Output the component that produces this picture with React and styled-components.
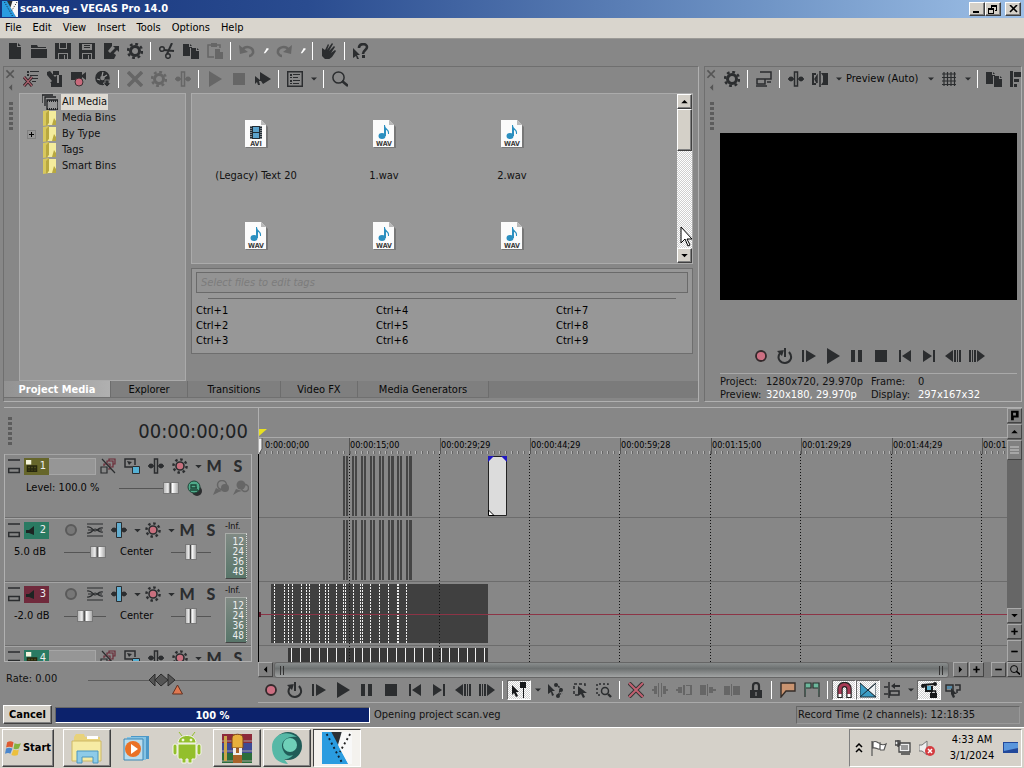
import React from 'react'
import styled, { createGlobalStyle, css } from 'styled-components'

const GlobalStyle = createGlobalStyle`
  * {
    box-sizing: border-box;
  }

  body {
    margin: 0;
    background: #878787;
    color: #111;
    font-family: 'DejaVu Sans Condensed', 'DejaVu Sans', sans-serif;
    font-size: 11px;
    line-height: 16px;
  }

  button, input, select {
    font: inherit;
    color: inherit;
    margin: 0;
  }

  button {
    background: none;
    border: none;
    padding: 0;
  }

  svg {
    display: block;
    flex: none;
  }
`

const raised = css`
  background: #d4d0c8;
  border: 1px solid;
  border-color: #fff #404040 #404040 #fff;
  box-shadow: inset -1px -1px 0 #808080;
`

const dither = css`
  background: repeating-conic-gradient(#fff 0 25%, #cfcfcf 0 50%) 0 0 / 2px 2px;
`

const Page = styled.div`
  min-height: 100vh;
  display: flex;
  flex-direction: column;
  overflow: hidden;
`

/* ---------- title and menu ---------- */

const TitleBar = styled.header`
  height: 18px;
  display: flex;
  align-items: center;
  gap: 2px;
  padding: 0 3px 0 2px;
  background: linear-gradient(90deg, #16347c, #2a4c90 30%, #7095c6 75%, #9dbfe6);
  color: #fff;
`

const Title = styled.h1`
  flex: 1;
  margin: 0;
  font-size: 11px;
  font-weight: 700;
`

const WindowButton = styled.button`
  ${raised}
  width: 16px;
  height: 14px;
  display: grid;
  place-items: center;
  margin-left: ${p => (p.$apart ? '2px' : '-2px')};
  color: #000;
`

const MenuBar = styled.nav`
  height: 21px;
  display: flex;
  gap: 11px;
  padding: 2px 5px;
  background: #d9d5cd;
  border-bottom: 1px solid #9c9a96;
`

const MenuItem = styled.button`
  color: #000;
`

/* ---------- toolbars ---------- */

const Toolbar = styled.div`
  height: ${p => p.$height || 26}px;
  min-width: 0;
  display: flex;
  align-items: center;
  padding-left: ${p => p.$indent || 0}px;
  padding-bottom: 3px;
  overflow: hidden;
`

const ToolButton = styled.button`
  width: ${p => p.$width || 24}px;
  height: 20px;
  flex: none;
  display: grid;
  place-items: center;
  color: ${p => (p.$off ? '#666' : '#2b2d2f')};
  ${p =>
    p.$pressed &&
    css`
      ${dither}
      border: 1px solid;
      border-color: #666 #fff #fff #666;
      color: #16181a;
    `}
`

const Separator = styled.i`
  width: 1px;
  height: 18px;
  flex: none;
  margin: 0 4px 0 3px;
  background: #fff;
`

/* ---------- docks ---------- */

const DockRow = styled.div`
  display: flex;
  gap: 5px;
  padding: 0 2px 5px 3px;
`

const Dock = styled.section`
  flex: ${p => (p.$width ? `0 0 ${p.$width}px` : '1 1 0')};
  min-width: 0;
  display: grid;
  grid-template-columns: 15px minmax(0, 1fr);
  grid-template-rows: auto 1fr auto;
  border: 1px solid;
  border-color: #6f6f6f #b0b0b0 #b0b0b0 #6f6f6f;
`

const GripColumn = styled.div`
  grid-row: 1 / 3;
  display: flex;
  flex-direction: column;
  align-items: center;
  padding: 1px 2px 0 0;
  color: #555;
`

const GripDots = styled.div`
  width: 4px;
  height: 30px;
  margin-top: ${p => p.$top || 0}px;
  background: radial-gradient(circle, #5c5c5c 2px, transparent 2px) 0 0 / 4px 5px;
`

const DockBody = styled.div`
  display: flex;
  gap: 5px;
  padding-right: 5px;
`

const Tree = styled.ul`
  width: 167px;
  min-height: 288px;
  margin: 0;
  padding: 0;
  list-style: none;
  background: #979797;
  border: 1px solid #aaa;
`

const TreeRow = styled.li`
  height: 16px;
  display: grid;
  grid-template-columns: 22px 19px auto;
  justify-content: start;
  align-items: center;
`

const TreeLabel = styled.span`
  padding: 0 1px;
  background: ${p => (p.$selected ? '#dedad2' : 'none')};
`

const Expander = styled.button`
  width: 9px;
  height: 9px;
  margin-left: 7px;
  border: 1px solid #808080;
`

const MediaColumn = styled.div`
  flex: 1;
  min-width: 0;
  display: flex;
  flex-direction: column;
  gap: 4px;
`

const MediaList = styled.div`
  height: 171px;
  display: flex;
  background: #979797;
  border: 1px solid #ababab;
`

const MediaGrid = styled.div`
  flex: 1;
  min-width: 0;
  display: grid;
  grid-template-columns: repeat(auto-fill, 128px);
  grid-auto-rows: 102px;
  overflow: hidden;
`

const MediaItem = styled.figure`
  margin: 0;
  padding-top: 26px;
  display: flex;
  flex-direction: column;
  align-items: center;
  gap: 20px;
`

const ScrollTrack = styled.div`
  ${dither}
  position: relative;
  width: 15px;
  display: flex;
  flex-direction: column;
`

const ScrollButton = styled.button`
  ${raised}
  height: 15px;
  display: grid;
  place-items: center;
  color: #000;
`

const ScrollThumb = styled.div`
  ${raised}
  height: 42px;
  margin-bottom: auto;
`

const Pointer = styled.svg`
  position: absolute;
  left: 3px;
  top: 132px;
`

const TagPanel = styled.div`
  height: 86px;
  padding: 3px 4px;
  background: #979797;
  border: 1px solid #6e6e6e;
`

const TagInput = styled.input`
  display: block;
  width: 100%;
  height: 21px;
  padding: 0 4px;
  background: #939393;
  border: 1px solid #6a6a6a;
  font-style: italic;

  &::placeholder {
    color: #7c7c7c;
    opacity: 1;
  }
`

const TagRule = styled.hr`
  height: 1px;
  margin: 5px 12px 4px;
  border: none;
  background: #686868;
`

const Shortcuts = styled.div`
  display: grid;
  grid-auto-flow: column;
  grid-template-columns: repeat(auto-fill, 180px);
  grid-template-rows: repeat(3, 15px);
  line-height: 15px;
  color: #000;
`

const Tabs = styled.div`
  grid-column: 1 / -1;
  height: 20px;
  display: flex;
  padding-bottom: 3px;
  background: linear-gradient(#7b7b7b 17px, #878787 17px);
`

const Tab = styled.button`
  width: ${p => p.$width}px;
  height: 17px;
  line-height: 15px;
  border-right: 1px solid #6d6d6d;
  border-bottom: 1px solid #707070;
  background: #7f7f7f;
  color: #080808;
  ${p =>
    p.$active &&
    css`
      background: linear-gradient(90deg, #929292, #b0b0b0);
      color: #fff;
      font-weight: 700;
    `}
`

const PreviewBody = styled.div`
  padding: 40px 4px 0 0;
`

const Video = styled.div`
  aspect-ratio: 297 / 167;
  background: #000;
`

const PreviewTransport = styled.div`
  display: flex;
  justify-content: center;
  padding: 46px 0 7px;
`

const PreviewSelect = styled.select`
  appearance: none;
  width: 79px;
  height: 18px;
  flex: none;
  padding: 0 1px;
  border: none;
  background: none;
  color: #080808;
`

const PreviewInfo = styled.dl`
  margin: 0;
  padding-top: 1px;
  display: grid;
  grid-template-columns: 46px 105px 47px auto;
  line-height: 13px;
  border-top: 1px solid #a9a9a9;

  dt, dd {
    margin: 0;
    white-space: nowrap;
  }
`

const Bright = styled.dd`
  color: #fff;
`

/* ---------- timeline ---------- */

const Timeline = styled.section`
  flex: 1;
  display: grid;
  grid-template-columns: 254px minmax(0, 1fr) 15px;
  grid-template-rows: 46px 208px 16px 25px;
  margin: 0 2px 0 4px;
  border-top: 1px solid #b0b0b0;
`

const TimeHead = styled.div`
  display: flex;
  align-items: center;
  justify-content: space-between;
  padding: 0 10px 0 4px;
`

const Timecode = styled.output`
  font-size: 20px;
  color: #202224;
`

const Tracks = styled.div`
  margin-right: 6px;
  overflow: hidden;
  border: 1px solid #b0b0b0;
  border-top: none;
`

const Track = styled.div`
  height: 64px;
  display: flex;
  border-bottom: 1px solid #6d6d6d;
  box-shadow: inset 0 1px 0 #a4a4a4;
`

const TrackMain = styled.div`
  flex: 1;
  min-width: 0;
  padding: 1px 0 0 3px;
`

const TrackRow = styled.div`
  height: 22px;
  display: flex;
  align-items: center;
`

const MixRow = styled(TrackRow)`
  padding-left: ${p => p.$indent}px;
  color: #080808;
`

const MixLabel = styled.label`
  width: ${p => p.$width}px;
  padding-left: ${p => p.$pad || 0}px;
  flex: none;
  white-space: nowrap;
`

const TrackBadge = styled.div`
  width: 25px;
  height: 17px;
  flex: none;
  display: flex;
  align-items: center;
  justify-content: space-between;
  padding: 0 3px 0 2px;
  margin-right: ${p => (p.$gap ? '10px' : 0)};
  background: ${p => p.$color};
  color: #eee;
`

const TrackName = styled.input`
  width: 47px;
  height: 17px;
  flex: none;
  border: 1px solid #a6a6a6;
  border-left: none;
  background: #969696;
`

const Letter = styled(ToolButton)`
  font-family: Lato, sans-serif;
  font-size: 16px;
  font-weight: 900;
  line-height: 20px;
`

const Fader = styled.input`
  appearance: none;
  width: ${p => p.$width}px;
  height: 18px;
  flex: none;
  background: linear-gradient(#555, #555) center / 100% 1px no-repeat;

  &::-webkit-slider-thumb {
    appearance: none;
    width: ${p => (p.$tall ? 12 : 16)}px;
    height: ${p => (p.$tall ? 16 : 12)}px;
    border: 1px solid #777;
    background: linear-gradient(90deg, #bbb, #eee 30%, #444 45%, #fff 60%, #aaa);
  }
`

const MeterColumn = styled.div`
  width: 26px;
  padding-top: 2px;
  font-size: 9px;
  line-height: 12px;
`

const Meter = styled.div`
  width: 22px;
  height: 46px;
  margin-top: 1px;
  padding: 3px 2px 0 0;
  border: 1px solid;
  border-color: #a8aca8 #444 #444 #a8aca8;
  background: linear-gradient(#808a84, #58766a);
  border-right: 1px dotted #ddd;
  color: #eee;
  font-size: 10px;
  line-height: 10px;
  text-align: right;
`

const MarkerBar = styled.div`
  display: flex;
  flex-direction: column;
  justify-content: flex-end;
  border-left: 1px solid #b0b0b0;
  min-width: 0;
`

const Ruler = styled.div`
  height: 17px;
  display: flex;
  overflow: hidden;
  border-top: 1px solid #aaa;
  background: repeating-linear-gradient(90deg, #b4b4b4 0 1px, #666 1px 2px, transparent 2px 6px) 0 100% / 100% 3px no-repeat;
`

const Tick = styled.span`
  width: ${p => p.$width}px;
  flex: none;
  border-left: 1px solid ${p => (p.$first ? 'transparent' : '#555')};
  font-size: 9px;
  line-height: 15px;
  white-space: nowrap;
  color: #000;
`

const Canvas = styled.div`
  position: relative;
  overflow: hidden;
  border-left: 1px solid #000;
`

const GridLines = styled.svg`
  position: absolute;
  inset: 0;
`

const Lane = styled.div`
  height: 64px;
  border-bottom: 1px solid #6c6c6c;
`

const SideScroll = styled.div`
  grid-row: 1 / 3;
  grid-column: 3;
  display: flex;
  flex-direction: column;
  gap: 1px;
  background: #666;
`

const GreyButton = styled.button`
  width: 15px;
  height: ${p => p.$height || 15}px;
  flex: none;
  display: grid;
  place-items: center;
  border: 1px solid;
  border-color: #aaa #444 #444 #aaa;
  background: #808080;
  color: #000;
  margin-top: ${p => (p.$push ? 'auto' : 0)};
  margin-right: ${p => p.$after || 0}px;
`

const Rate = styled.div`
  grid-row: 3 / 5;
  display: flex;
  align-items: flex-start;
  padding: 9px 0 0 2px;
`

const RateSlider = styled.svg`
  margin-left: 31px;
`

const BottomScroll = styled.div`
  grid-column: 2 / 4;
  display: flex;
  gap: 1px;
  background: #777;
`

const BottomThumb = styled.div`
  flex: 1;
  display: flex;
  justify-content: space-between;
  align-items: center;
  padding: 0 4px;
  margin-right: 3px;
  border: 1px solid #666;
  border-radius: 3px;
  background: linear-gradient(#8a8e8e, #6c7070 40%, #a2a4a4);
`

const BottomTools = styled(Toolbar)`
  grid-column: 2 / 4;
  border-bottom: 1px solid #aaa;
  padding-bottom: 1px;
`

/* ---------- status and taskbar ---------- */

const Status = styled.footer`
  height: 24px;
  display: flex;
  align-items: center;
  padding: 0 4px 1px 3px;
`

const Cancel = styled.button`
  ${raised}
  width: 49px;
  height: 19px;
  line-height: 16px;
  font-weight: 700;
  color: #000;
`

const Progress = styled.div`
  width: 315px;
  height: 16px;
  margin: 0 4px 0 3px;
  border: 1px solid;
  border-color: #666 #fff #fff #666;
  background: #0c226c;
  color: #fff;
  font-weight: 700;
  line-height: 15px;
  text-align: center;
`

const RecordTime = styled.div`
  width: 224px;
  height: 18px;
  margin-left: auto;
  padding-left: 1px;
  border: 1px solid;
  border-color: #666 #999 #999 #666;
`

const Taskbar = styled.nav`
  height: 42px;
  display: flex;
  align-items: flex-start;
  gap: 2px;
  padding: 1px 2px;
  background: #d5d1c9;
  border-top: 1px solid #fff;
`

const Start = styled.button`
  ${raised}
  width: 52px;
  height: 38px;
  display: flex;
  align-items: center;
  justify-content: center;
  gap: 1px;
  margin-right: 7px;
  color: #000;
  font-weight: 700;
`

const TaskButton = styled.button`
  width: 48px;
  height: 38px;
  display: grid;
  place-items: center;
  ${p => p.$open && raised}
  ${p =>
    p.$active &&
    css`
      background: #f4f2ee;
      border: 1px solid;
      border-color: #404040 #fff #fff #404040;
    `}
`

const Tray = styled.div`
  height: 38px;
  margin-left: auto;
  display: flex;
  align-items: center;
  gap: 8px;
  padding: 0 3px 0 5px;
  border: 1px solid;
  border-color: #808080 #fff #fff #808080;
`

const Clock = styled.time`
  width: 46px;
  margin-left: 6px;
  text-align: center;
  white-space: nowrap;
  color: #000;
`

/* ---------- icons ---------- */

const line = { fill: 'none', stroke: 'currentColor', strokeWidth: 1.5 }

const page = 'M2 0h8v4h4v12H2zM11 0l3 3h-3z'
const gear = (
  <g fill="none" stroke="currentColor">
    <circle cx="8" cy="8" r="4.5" strokeWidth="3" />
    <circle cx="8" cy="8" r="7" strokeWidth="2.4" strokeDasharray="2.8 2.7" />
  </g>
)
const fxGear = (
  <g>
    <circle cx="8" cy="8" r="4" fill="#c8707e" stroke="currentColor" strokeWidth="1.6" />
    <circle cx="8" cy="8" r="6.6" fill="none" stroke="currentColor" strokeWidth="2.4" strokeDasharray="2.5 2.68" />
  </g>
)

const glyphs = {
  new: <path d={page} />,
  open: <path d="M0 2h6l1 2h8v1H0zM0 6h16v9H0z" />,
  save: <path fillRule="evenodd" d="M0 0h16v16h-3v-6H3v6H0zM4 0v6h8V0h-1v5H5V0zM4 11h8v5h-2v-4H9v4H4z" />,
  saveAs: <path fillRule="evenodd" d="M0 0h16v16h-3v-6H3v6H0zM3 1v6h10V1zM5 2h6v1H5zM5 4h6v1H5zM4 11h8v5h-2v-4H9v4H4z" />,
  render: (
    <g>
      <path d="M1 0h8v3l-4 5 4 4v4H1z" />
      <path d="M6 11l6-6-2-2h6v6l-2-2-6 6z" />
      <path d="M9 9l4 3-2 4H7z" />
    </g>
  ),
  gear,
  cut: (
    <g {...line}>
      <circle cx="3" cy="6" r="2.3" />
      <circle cx="9" cy="13" r="2.3" />
      <path d="M5 7l10 1M8 11L13 0" strokeWidth="2" />
    </g>
  ),
  copy: <path d="M0 1h6v3h3v1H7v8H0zM8 5h5v3h3v8H8zM14 5l2 2h-2zM7 1l2 2H7z" />,
  paste: (
    <g>
      <path {...line} d="M7 14H1V2h12v3" />
      <path d="M4 0h6v4H4zM8 6h5v3h3v7H8z" />
    </g>
  ),
  undo: (
    <g>
      <path {...line} strokeWidth="2.5" d="M3 7c4-5 12-3 11 3-1 2-2 3-4 3" />
      <path d="M0 2l1 9 8-2z" />
    </g>
  ),
  redo: (
    <g>
      <path {...line} strokeWidth="2.5" d="M13 7C9 2 1 4 2 10c1 2 2 3 4 3" />
      <path d="M16 2l-1 9-8-2z" />
    </g>
  ),
  more: <path d="M9 4l3 1-5 6H5z" fill="#fff" />,
  hand: <path d="M1 5l3 2 3-6 1 1-2 5 5-7 1 1-4 7 5-5 1 1-4 6 4-3 1 1-4 6-4 3H5l-4-4z" />,
  help: (
    <g>
      <path d="M0 5l7 7H4l2 4-2 0-1-3-3 2z" />
      <path {...line} strokeWidth="2.6" d="M6 5c0-5 8-5 8-1 0 3-4 3-4 7" />
      <path d="M9 12h3v3H9z" />
    </g>
  ),
  list: (
    <g>
      <path d="M4 0h2v2H4zM7 0h9v1H7zM4 3h2v2H4zM7 4h8v1H7zM9 7h6v1H9zM9 10h4v1H9z" />
      <path fill="none" stroke="#302024" strokeWidth="3" d="M1 6l8 9M9 6l-8 9" />
      <path fill="none" stroke="#a8606c" strokeWidth="1.2" d="M1 6l8 9M9 6l-8 9" />
    </g>
  ),
  import: (
    <g>
      <path d="M6 0h6v4h3v12H4v-4h8V4H6z" />
      <path d="M0 1l3-1 5 6 2-2v8H3l2-2-5-6z" />
    </g>
  ),
  capture: (
    <g>
      <path d="M0 1h11v3l4-3v8l-4-3v3H0z" />
      <circle cx="8" cy="11" r="4" fill="#c86a7c" stroke="#3a3032" />
    </g>
  ),
  disc: (
    <g>
      <circle cx="7.500" cy="7" r="4.800" fill="none" stroke="currentColor" strokeWidth="5" />
      <path stroke="#999" strokeWidth="1.2" d="M8 1l-1 4M12 4L9 6M2 8l3 1" />
      <path d="M10 9h4v3h2l-4 4-4-4h2z" stroke="#878787" strokeWidth=".8" />
    </g>
  ),
  cross: <path {...line} strokeWidth="3.5" d="M1 1l14 14M15 1L1 15" />,
  redCross: (
    <g fill="none">
      <path stroke="#333" strokeWidth="4" d="M1 1l14 14M15 1L1 15" />
      <path stroke="#c06070" strokeWidth="2" d="M1 1l14 14M15 1L1 15" />
    </g>
  ),
  fx: (
    <g>
      <path {...line} d="M6.5 1h3v14h-3zM0 8h6M10 8h6" />
      <circle cx="3" cy="8" r="2.4" />
      <circle cx="13" cy="8" r="2.4" />
    </g>
  ),
  fxBlue: (
    <g>
      <path {...line} d="M0 8h16" />
      <circle cx="3" cy="8" r="2.4" />
      <circle cx="13" cy="8" r="2.4" />
      <path fill="#62aed0" stroke="currentColor" d="M5.5.5h5v15h-5z" />
    </g>
  ),
  play: <path d="M2 0l13 8-13 8z" />,
  stop: <path d="M2 2h12v12H2z" />,
  autoPlay: <path d="M5 1l11 7-8 5-2-3H4l1 4H3l-1-3-2 2V5l5 4z" />,
  views: (
    <g>
      <path {...line} d="M.7.7h14.6v14.6H.7z" />
      <path d="M3 3h2v2H3zM3 6h2v1H3zM3 9h2v2H3zM3 12h2v1H3zM6 3h7v1H6zM6 6h5v1H6zM6 9h7v1H6zM6 12h6v1H6z" />
    </g>
  ),
  search: (
    <g {...line}>
      <circle cx="6.5" cy="6.5" r="5.6" />
      <path d="M10 10l6 5" strokeWidth="2.6" />
    </g>
  ),
  arrow: <path d="M4 6h8l-4 4z" />,
  up: <path d="M4 10h8l-4-4z" />,
  down: <path d="M4 6h8l-4 4z" />,
  left: <path d="M10 4v8L6 8z" />,
  right: <path d="M6 4v8l4-4z" />,
  plus: <path d="M4 7h3V4h2v3h3v2H9v3H7V9H4z" />,
  minus: <path d="M4 7h8v2H4z" />,
  marker: <path fillRule="evenodd" d="M2 1h12v10H7v4H3V1zM6 4v4h4V4z" />,
  screens: (
    <g {...line}>
      <path d="M4 1h11v7H9M1 8h8v5H1zM0 15h11M11 11h4" />
    </g>
  ),
  split: (
    <g>
      <path d="M0 2h4v2H2v8h2v2H0zM9 2h7v12H9l2-3V5z" />
      <path {...line} d="M8 0v16M5 5l-2 3 2 4z" />
    </g>
  ),
  grid: <path {...line} d="M3 1v14M6.5 1v14M10 1v14M13.500 1v14M1 3h14M1 6.500h14M1 10h14M1 13.500h14" strokeWidth="1.2" />,
  snap: <path d="M0 0h3v16H0zM4 1h7v5H4zM4 8h5v3H4zM4 13h3v3H4z" />,
  record: <circle cx="8" cy="8" r="5" fill="#cc6f82" stroke="#33292b" strokeWidth="1.8" />,
  loop: (
    <g>
      <path {...line} strokeWidth="2" d="M3 5c-4 6 1 10 5 10s9-5 4-11" />
      <path d="M0 3l7-1-2 6zM7 0h2v9H7z" />
    </g>
  ),
  playStart: <path d="M1 2h2v12H1zM5 2l10 6-10 6z" />,
  pause: <path d="M2 2h4v12H2zM9 2h4v12H9z" />,
  prev: <path d="M2 2h2v12H2zM14 2v12L5 8z" />,
  next: <path d="M12 2h2v12h-2zM2 2l9 6-9 6z" />,
  frameBack: <path d="M8 2v12L0 8zM9 2h2v12H9zM12 2h1v12h-1zM14 2h2v12h-2z" />,
  frameNext: <path d="M8 2v12l8-6zM5 2h2v12H5zM3 2h1v12H3zM0 2h2v12H0z" />,
  edit: <path d="M1 3l7 7H5l2 4-2 1-2-4-2 2zM9 0h6v6h-2v10h-1V6H9z" />,
  envelope: (
    <g>
      <path d="M0 2l7 7H4l2 4-2 1-1-4-3 2z" />
      <path {...line} strokeDasharray="2 1" d="M8 2l5 5-3 6 4-2" />
      <circle cx="8" cy="3" r="2" />
      <circle cx="13" cy="8" r="2" />
      <circle cx="10" cy="14" r="2" />
    </g>
  ),
  selectBox: (
    <g>
      <path {...line} strokeDasharray="3 2" d="M6 13H2V2h11v4" />
      <path d="M6 4l9 7h-4l2 4-2 1-2-4-3 2z" />
    </g>
  ),
  zoomBox: (
    <g {...line}>
      <path strokeDasharray="2 2" d="M4 13H1V2h11v2" />
      <circle cx="9" cy="9" r="3.500" />
      <path strokeWidth="2.4" d="M12 12l3 3" />
    </g>
  ),
  trim: <path d="M6 1h1v14H6zM9 1h1v14H9zM0 7h2v2H0zM2 4h3v8H2zM11 4h3v8h-3zM14 7h2v2h-2z" />,
  trimStart: <path d="M0 7h2V5h4v6H2V9H0zM7 3h2v10H7zM10 3h6v10h-6v-1h4V4h-4z" />,
  trimEnd: <path d="M0 3h6v10H0zM7 2h1v12H7zM9 5h4v2h3v2h-3v2H9z" />,
  splitEvent: <path d="M0 4h6v9H0zM7 2h1v12H7zM9 4h7v9H9z" />,
  lock: (
    <g>
      <path d="M2 8h12v8H2z" />
      <path {...line} strokeWidth="2.2" d="M5 8V4c0-4 6-4 6 0v4" />
      <path stroke="#999" d="M8 10v4" />
    </g>
  ),
  flag: <path fill="#ca9470" stroke="#352d28" strokeWidth="1.4" d="M1 1h14v8H6l-5 6z" />,
  flags: <path fill="#6db89d" stroke="#26302c" strokeWidth="1.2" d="M1 15V1h6v5H2M15 15V1H9v5h5" />,
  magnet: (
    <g fill="none">
      <path stroke="#222" strokeWidth="5.500" d="M4 16V7c0-6 9-6 9 0v9" />
      <path stroke="#a73a54" strokeWidth="3.200" d="M4 12V7c0-6 9-6 9 0v5" />
      <path stroke="#fff" strokeWidth="3" d="M4 12v3M13 12v3" />
    </g>
  ),
  crossfade: (
    <g stroke="#1b2c36">
      <path fill="#3b9cc4" d="M0 1l16 14H0z" />
      <path fill="#eef2f4" d="M16 1v14L8 8z" />
      <path d="M0 15L16 1" />
    </g>
  ),
  ripple: (
    <g>
      <path {...line} d="M5 0v16M0 5h4M0 12h4M6 9h9v4H6z" />
      <path d="M7 4l4-3v2h5v2h-5v2z" />
    </g>
  ),
  lockEnvelope: (
    <g>
      <path {...line} d="M1 3l13-1M5 3v6h6V4" strokeWidth="2" />
      <circle cx="2" cy="4" r="2" />
      <circle cx="14" cy="2" r="2" />
      <path fill="#5fb3d0" d="M6 4h4v4H6z" />
      <path d="M9 11h7v5H9z" />
      <path {...line} d="M10.500 11V9h4v2" />
    </g>
  ),
  ignore: (
    <g>
      <path {...line} d="M1 3h7v6H1zM10 3h5v5h-3v3" />
      <path fill="#5488a4" d="M2 4h5v3H2z" />
      <path d="M6 6l6 6H9l1 3-2 1-2-4z" />
    </g>
  ),
  motion: (
    <g fill="none" stroke="currentColor" strokeWidth="1.2">
      <path stroke="#6c2c38" d="M4 8V6h6v5H8M7 5V3h6v6h-2M9 3V1h6v5h-2" />
      <path d="M1 9h6v6H1zM2 1l13 14" />
    </g>
  ),
  pan: (
    <g>
      <path {...line} d="M8 9H1V1h10v6" />
      <path d="M3 3l5 1-3 3z" />
      <path fill="#54b0d4" stroke="currentColor" d="M8.500 8.500h7v7h-7z" />
    </g>
  ),
  fxGear,
  recordOff: <circle cx="8" cy="8" r="5" fill="#777" stroke="#5a5a5a" strokeWidth="2" />,
  phase: <path {...line} strokeWidth="1.2" d="M0 2h16M0 14h16M0 5c5-1 6 4 8 4s3-4 8-3M0 11c5 1 6-4 8-4s3 4 8 3M1 8h4M11 8h4" />,
  bars: <path {...line} d="M0 2h12M.7 10.500h10.600v4H.7z" />,
  composite: (
    <g>
      <circle cx="10" cy="11" r="5" />
      <circle cx="7" cy="7" r="6" fill="#4faa8a" stroke="#1d4436" />
      <path fill="none" stroke="#1d4436" strokeWidth="1.300" d="M10 8H4V5h5v3M3 10h8" />
    </g>
  ),
  mask: (
    <g>
      <circle cx="9" cy="5" r="4.500" {...line} />
      <circle cx="12" cy="8" r="4" />
      <path d="M0 15l3-7 6 3-3 1z" />
    </g>
  ),
  childMask: (
    <g>
      <circle cx="8" cy="5" r="4.500" />
      <circle cx="12" cy="8" r="3.500" {...line} />
      <path d="M0 15l3-6 6 2-4 1z" />
    </g>
  ),
  film: (
    <g fill="none" stroke="#202224" strokeWidth="1.300">
      <path d="M0 9V1h11M3 12V3h11" />
      <path d="M5 6h11v10H5z" />
      <path strokeDasharray="1 1" strokeWidth="2" d="M5 7h11M5 15h11" />
    </g>
  ),
  badgeFilm: (
    <g>
      <path d="M0 0h7v6H0z" fill="#f4f4dc" />
      <path d="M1 7h14v9H1z" fill="#26260e" />
      <path d="M3 9h2v2H3zM7 9h2v2H7zM11 9h2v2h-2zM3 13h2v1H3zM7 13h2v1H7zM11 13h2v1h-2z" fill="#55551f" />
    </g>
  ),
  folder: (
    <g>
      <path fill="#d8c85c" d="M1 1l6-1v15l-6 1z" />
      <path fill="#f4ec9c" d="M6 1h8v14H6z" />
      <path fill="#b8a840" d="M7 0v13l-3 3V3zM12 8l2 3v4h-4z" />
    </g>
  ),
  closeSmall: <path {...line} strokeWidth="2" d="M3 3l9 9M12 3l-9 9" />
}

const Icon = ({ name, size = 16 }) => (
  <svg width={size} height={size} viewBox="0 0 16 16" fill="currentColor" aria-hidden="true">
    {glyphs[name]}
  </svg>
)

const FileIcon = ({ kind }) => (
  <svg width="26" height="28" viewBox="0 0 26 28" aria-hidden="true">
    <path d="M3 2h17l5 5v21H3z" fill="#777" />
    <path d="M2 0h16l5 5v22H2z" fill="#fbfbfb" />
    <path d="M18 0v5h5z" fill="#b9b9b9" />
    {kind === 'AVI' ? (
      <g>
        <path d="M7 6h12v13H7z" fill="#222c34" />
        <path d="M10 7h6v5h-6zM10 13h6v5h-6z" fill="#5ba3cc" />
        <path d="M8 6v13M18 6v13" stroke="#ddd" strokeDasharray="1 1" />
      </g>
    ) : (
      <g fill="#2b8fc0">
        <ellipse cx="11" cy="16" rx="3.500" ry="3" />
        <path d="M13 5h1c0 4 5 4 4 9h-1c0-3-1-4-2-4v6h-2z" />
      </g>
    )}
    <text x="13" y="26" textAnchor="middle" fontSize="7" fontWeight="700" fill="#3c3c3c">
      {kind}
    </text>
  </svg>
)

const VegasLogo = ({ width, height }) => (
  <svg width={width} height={height} viewBox="0 0 32 32" preserveAspectRatio="none" aria-hidden="true">
    <path d="M8 0h18l-9 17z" fill="#2c3034" />
    <path d="M0 0h10l18 32H0z" fill="#2a9ce0" />
    <path d="M21 0h11v32H28L17 13z" fill="#f8f8f8" />
    <path d="M5 2l17 30" stroke="#102030" strokeWidth="2" strokeDasharray="2 3" />
    <path d="M30 2L19 20" stroke="#202020" strokeWidth="2" strokeDasharray="2 3" />
  </svg>
)

const StartFlag = () => (
  <svg width="17" height="17" viewBox="0 0 16 16" aria-hidden="true">
    <path d="M2 2c2-1 4-1 6 0L7 7C5 6 3 6 1 7z" fill="#dd5a31" />
    <path d="M9 3c2 1 4 1 6 0l-2 5c-2 1-4 1-5 0z" fill="#84b23c" />
    <path d="M1 8c2-1 4-1 6 0l-2 5c-1-1-3-1-5 0z" fill="#4a86cc" />
    <path d="M8 9c2 1 4 1 5 0l-1 5c-2 1-4 1-6 0z" fill="#ecc03c" />
  </svg>
)

const taskArt = {
  Explorer: (
    <g>
      <path d="M3 5l2-3h8l1 3h15v20H3z" fill="#e8d27a" />
      <path d="M1 9h29v20H1z" fill="#f6eba4" stroke="#cdb864" />
      <path d="M16 4h11v3H16z" fill="#fff" />
      <path d="M6 19h21v12h-5v-6H11v6H6z" fill="#8ecbe8" stroke="#4b96c0" />
    </g>
  ),
  Player: (
    <g>
      <path d="M10 4h18v23H10z" fill="#4c98c8" />
      <path d="M6 5h19v23H6z" fill="#86c4e4" />
      <path d="M3 7h19v21H3z" fill="#b8dcee" stroke="#3d86b4" />
      <circle cx="12" cy="17" r="8" fill="#ea7126" />
      <path d="M10 12l7 5-7 5z" fill="#fff" />
    </g>
  ),
  Android: (
    <g fill="#93bf2c" stroke="#f5f8e8" strokeWidth="1">
      <path d="M7 11c0-10 18-10 18 0z" />
      <path d="M7 12h18v13c0 2-1 2-2 2h-2v4h-4v-4h-2v4h-4v-4H9c-1 0-2 0-2-2z" />
      <rect x="2" y="12" width="4" height="11" rx="2" />
      <rect x="26" y="12" width="4" height="11" rx="2" />
      <path d="M11 4L8 0M21 4l3-4" stroke="#93bf2c" />
      <circle cx="12" cy="8" r="1" fill="#fff" />
      <circle cx="20" cy="8" r="1" fill="#fff" />
    </g>
  ),
  WinRAR: (
    <g>
      <path d="M1 2h30v9H1z" fill="#8c2a3a" />
      <path d="M1 11h30v10H1z" fill="#3d4a96" />
      <path d="M1 21h30v10H1z" fill="#2c6e3c" />
      <path d="M1 9h30M1 19h30M1 29h30" stroke="#a8a09c" />
      <path d="M3 4h3v25H3z" fill="#cba64a" />
      <path d="M12 2h9v29h-9z" fill="#a8622a" />
      <path d="M11 6c0-5 11-5 11 0v10H11z" fill="#e8b03c" stroke="#7a4420" />
      <path d="M12 16h3v5h3v-5h3v7h-9z" fill="#eee" />
    </g>
  ),
  Camtasia: (
    <g>
      <circle cx="17" cy="14" r="14" fill="#205c58" />
      <path d="M1 15C1 2 16-3 26 5 16 3 8 10 12 18c2 5 6 7 10 5-4 5-9 4-9 4l4 5C6 31 1 25 1 15z" fill="#56b8a6" />
      <circle cx="19" cy="13" r="7" fill="#6fd0b8" />
    </g>
  )
}

/* ---------- data ---------- */

const menu = ['File', 'Edit', 'View', 'Insert', 'Tools', 'Options', 'Help']

// '|' draws a separator, a leading '-' a greyed icon, a leading '+' a pressed one
const mainTools = ['new', 'open', 'save', 'saveAs', 'render', 'gear', '|', 'cut', 'copy', '-paste', '|', '-undo', '-more', '-redo', '-more', '|', 'hand', '|', 'help']
const mediaTools = ['list', 'import', 'capture', 'disc', '|', '-cross', '-gear', '-fx', '|', '-play', '-stop', 'autoPlay', '|', 'views', 'arrow', '|', 'search']
const transport = ['record', 'loop', 'playStart', 'play', 'pause', 'stop', 'prev', 'next', 'frameBack', 'frameNext']
const editTools = [
  ...transport, '|', '+edit', 'arrow', 'envelope', 'selectBox', 'zoomBox', '|',
  'redCross', '-trim', '-trimStart', '-trimEnd', '-splitEvent', 'lock', '|',
  'flag', 'flags', '|', '+magnet', '+crossfade', 'ripple', 'arrow', '+lockEnvelope', 'ignore'
]

const tree = ['All Media', 'Media Bins', 'By Type', 'Tags', 'Smart Bins']
const media = [
  { kind: 'AVI', name: '(Legacy) Text 20' },
  { kind: 'WAV', name: '1.wav' },
  { kind: 'WAV', name: '2.wav' },
  { kind: 'WAV' },
  { kind: 'WAV' },
  { kind: 'WAV' }
]
const tabs = [
  ['Project Media', 107],
  ['Explorer', 77],
  ['Transitions', 93],
  ['Video FX', 77],
  ['Media Generators', 131]
]

const ticks = [
  ['0:00:00;00', 90],
  ['00:00:15;00', 91],
  ['00:00:29;29', 90],
  ['00:00:44;29', 90],
  ['00:00:59;28', 91],
  ['00:01:15;00', 90],
  ['00:01:29;29', 91],
  ['00:01:44;29', 90],
  ['00:01:59;28', 90]
]
const gridX = [90, 180, 270, 360, 451, 541, 632, 722]
const stripes = [[84, 2], [87, 2], [93, 2], [96, 2], [102, 2], [105, 2], [111, 2], [114, 2], [120, 2], [123, 2], [129, 2], [132, 3], [138, 2], [141, 2], [147, 2], [150, 3]]
const audioCuts = [15, 25, 29, 33, 42, 47, 50, 60, 66, 69, 77, 84, 86, 94, 101, 103, 111, 120, 129, 138, 139, 147]
const videoCuts = [32, 41, 51, 60, 68, 77, 86, 95, 103, 111, 120, 128, 137, 146, 155, 164, 173, 182, 190, 199, 208, 216, 225]

/* ---------- parts ---------- */

const Tools = ({ items }) =>
  items.map((item, i) => {
    if (item === '|') return <Separator key={i} />
    const name = item.replace(/^[-+]/, '')
    const narrow = name === 'arrow' || name === 'more'
    return (
      <ToolButton
        key={i}
        aria-label={name}
        $width={narrow ? 13 : 24}
        $off={item[0] === '-'}
        $pressed={item[0] === '+'}
      >
        <Icon name={name} size={narrow ? 12 : 16} />
      </ToolButton>
    )
  })

const Grip = () => (
  <GripColumn>
    <Icon name="closeSmall" size={13} />
    <Icon name="left" size={13} />
    <GripDots $top={7} />
  </GripColumn>
)

const DropArrow = () => (
  <ToolButton $width={10} aria-label="More"><Icon name="arrow" size={13} /></ToolButton>
)

const VideoTrack = ({ number, color, level }) => (
  <Track>
    <TrackMain>
      <TrackRow>
        <ToolButton $width={16} aria-label="Minimize track"><Icon name="bars" /></ToolButton>
        <TrackBadge $color={color}><Icon name="badgeFilm" size={12} />{number}</TrackBadge>
        <TrackName aria-label={`Track ${number} name`} />
        <Tools items={['motion', 'pan', 'fx', 'fxGear']} />
        <DropArrow />
        <Letter>M</Letter>
        <Letter>S</Letter>
      </TrackRow>
      {level && (
        <MixRow $indent={18}>
          <MixLabel htmlFor={`level${number}`} $width={93}>Level: {level}</MixLabel>
          <Fader id={`level${number}`} type="range" defaultValue={100} $width={60} />
          <ToolButton $width={32} aria-label="Compositing"><Icon name="composite" /></ToolButton>
          <ToolButton $width={20} $off aria-label="Make parent"><Icon name="mask" /></ToolButton>
          <ToolButton $width={20} $off aria-label="Make child"><Icon name="childMask" /></ToolButton>
        </MixRow>
      )}
    </TrackMain>
  </Track>
)

const AudioTrack = ({ number, color, volume, position }) => (
  <Track>
    <TrackMain>
      <TrackRow>
        <ToolButton $width={16} aria-label="Minimize track"><Icon name="bars" /></ToolButton>
        <TrackBadge $color={color} $gap>
          <svg width="9" height="9" viewBox="0 0 9 9" aria-hidden="true">
            <path d="M0 4h3l5-4v9L3 7H0z" fill="#1c2422" />
          </svg>
          {number}
        </TrackBadge>
        <Tools items={['recordOff', 'phase', 'fxBlue']} />
        <DropArrow />
        <Tools items={['fxGear']} />
        <DropArrow />
        <Letter>M</Letter>
        <Letter>S</Letter>
      </TrackRow>
      <MixRow $indent={6}>
        <MixLabel htmlFor={`vol${number}`} $width={50}>{volume}</MixLabel>
        <Fader id={`vol${number}`} type="range" defaultValue={position} $width={42} />
        <MixLabel htmlFor={`bal${number}`} $width={65} $pad={14}>Center</MixLabel>
        <Fader id={`bal${number}`} type="range" defaultValue={50} $width={40} $tall />
      </MixRow>
    </TrackMain>
    <MeterColumn>
      -Inf.
      <Meter>12<br />24<br />36<br />48</Meter>
    </MeterColumn>
  </Track>
)

const StripeClips = () =>
  stripes.map(([x, w]) => (
    <rect key={x} x={x} y="2" width={w} height="60" fill="#454545" />
  ))

const App = () => {
  return (
    <Page>
      <GlobalStyle />
      <TitleBar>
        <VegasLogo width={16} height={16} />
        <Title>scan.veg - VEGAS Pro 14.0</Title>
        <WindowButton aria-label="Minimize">
          <svg width="10" height="8"><path d="M1 6h6v2H1z" /></svg>
        </WindowButton>
        <WindowButton aria-label="Restore">
          <svg width="10" height="9"><path d="M3 0h6v6H7V5h1V2H4v1H3zM0 3h6v6H0zM1 5v3h4V5z" fillRule="evenodd" /></svg>
        </WindowButton>
        <WindowButton $apart aria-label="Close">
          <svg width="9" height="8"><path d="M1 0l7 7M8 0L1 7" stroke="#000" strokeWidth="1.600" /></svg>
        </WindowButton>
      </TitleBar>
      <MenuBar>
        {menu.map(item => <MenuItem key={item}>{item}</MenuItem>)}
      </MenuBar>
      <Toolbar $height={27} $indent={3}>
        <Tools items={mainTools} />
      </Toolbar>

      <DockRow>
        <Dock>
          <Grip />
          <Toolbar><Tools items={mediaTools} /></Toolbar>
          <DockBody>
            <Tree>
              {tree.map((label, i) => (
                <TreeRow key={label}>
                  {label === 'By Type' ? (
                    <Expander aria-label="Expand">
                      <svg width="7" height="7"><path d="M1 3h2V1h1v2h2v1H4v2H3V4H1z" /></svg>
                    </Expander>
                  ) : <span />}
                  <Icon name={i ? 'folder' : 'film'} />
                  <TreeLabel $selected={i === 0}>{label}</TreeLabel>
                </TreeRow>
              ))}
            </Tree>
            <MediaColumn>
              <MediaList>
                <MediaGrid>
                  {media.map(({ kind, name }, i) => (
                    <MediaItem key={i}>
                      <FileIcon kind={kind} />
                      {name && <figcaption>{name}</figcaption>}
                    </MediaItem>
                  ))}
                </MediaGrid>
                <ScrollTrack>
                  <ScrollButton aria-label="Scroll up"><Icon name="up" size={13} /></ScrollButton>
                  <ScrollThumb />
                  <ScrollButton aria-label="Scroll down"><Icon name="down" size={13} /></ScrollButton>
                  <Pointer width="13" height="21" viewBox="0 0 13 21" aria-hidden="true">
                    <path d="M1 1v16l4-4 3 7 2-1-3-6h5z" fill="#fff" stroke="#000" />
                  </Pointer>
                </ScrollTrack>
              </MediaList>
              <TagPanel>
                <TagInput aria-label="Tags" placeholder="Select files to edit tags" />
                <TagRule />
                <Shortcuts>
                  {[1, 2, 3, 4, 5, 6, 7, 8, 9].map(n => <span key={n}>Ctrl+{n}</span>)}
                </Shortcuts>
              </TagPanel>
            </MediaColumn>
          </DockBody>
          <Tabs>
            {tabs.map(([label, width], i) => (
              <Tab key={label} $width={width} $active={i === 0}>{label}</Tab>
            ))}
          </Tabs>
        </Dock>

        <Dock $width={318}>
          <Grip />
          <Toolbar>
            <Tools items={['gear', '|', 'screens', '|', 'fx', 'split', 'arrow']} />
            <PreviewSelect aria-label="Preview quality">
              <option>Preview (Auto)</option>
            </PreviewSelect>
            <Tools items={['arrow', 'grid', 'arrow', '|', 'copy', 'snap']} />
          </Toolbar>
          <PreviewBody>
            <Video />
            <PreviewTransport><Tools items={transport} /></PreviewTransport>
            <PreviewInfo>
              <dt>Project:</dt>
              <dd>1280x720, 29.970p</dd>
              <dt>Frame:</dt>
              <dd>0</dd>
              <dt>Preview:</dt>
              <Bright>320x180, 29.970p</Bright>
              <dt>Display:</dt>
              <Bright>297x167x32</Bright>
            </PreviewInfo>
          </PreviewBody>
        </Dock>
      </DockRow>

      <Timeline>
        <TimeHead>
          <GripDots />
          <Timecode>00:00:00;00</Timecode>
        </TimeHead>
        <MarkerBar>
          <svg width="8" height="8"><path d="M0 0h8L0 7z" fill="#e8e020" /></svg>
          <Ruler>
            <svg width="5" height="16"><path d="M-3 0h6v11l-3 5h-3z" fill="#eee" stroke="#555" /></svg>
            {ticks.map(([label, width], i) => (
              <Tick key={label} $first={i === 0} $width={i ? width : width - 5}>{label}</Tick>
            ))}
          </Ruler>
        </MarkerBar>
        <SideScroll>
          <GreyButton aria-label="Marker"><Icon name="marker" size={11} /></GreyButton>
          <GreyButton aria-label="Scroll up"><Icon name="up" size={13} /></GreyButton>
          <GreyButton $height={20} aria-label="Track scroll">
            <svg width="9" height="9"><path d="M0 1h9M0 4h9M0 7h9" stroke="#ccc" /></svg>
          </GreyButton>
          <GreyButton $push aria-label="Scroll down"><Icon name="down" size={13} /></GreyButton>
          <GreyButton aria-label="Zoom in height"><Icon name="plus" size={13} /></GreyButton>
          <GreyButton $height={22} aria-label="Zoom out height"><Icon name="minus" size={13} /></GreyButton>
        </SideScroll>

        <Tracks>
          <VideoTrack number={1} color="#66662a" level="100.0 %" />
          <AudioTrack number={2} color="#2a7a62" volume="5.0 dB" position={100} />
          <AudioTrack number={3} color="#702a3c" volume="-2.0 dB" position={50} />
          <VideoTrack number={4} color="#2a7a62" />
        </Tracks>
        <Canvas>
          <GridLines width="100%" height="100%" aria-hidden="true">
            {gridX.map(x => (
              <path key={x} d={`M${x}.5 0v208`} stroke="#111" strokeDasharray="1 2" />
            ))}
          </GridLines>
          <Lane>
            <svg width="100%" height="63" aria-hidden="true">
              <StripeClips />
              <path d="M229.500 2.500h18v59h-18z" fill="#dcdcdc" stroke="#222" />
              <path d="M229 2h6l-6 6zM248 2h-6l6 6z" fill="#2018c0" />
              <path d="M229.500 56v5.500h5.500z" fill="#fff" stroke="#000" />
            </svg>
          </Lane>
          <Lane>
            <svg width="100%" height="63" aria-hidden="true"><StripeClips /></svg>
          </Lane>
          <Lane>
            <svg width="100%" height="63" aria-hidden="true">
              <path d="M12 2h217v59H12z" fill="#404040" />
              {audioCuts.map(x => (
                <path key={x} d={`M${x}.5 2v59`} stroke="#eee" strokeDasharray="2 1" />
              ))}
              <path d="M0 32.500h2000" stroke="#8c3446" />
              <path d="M0 30h2v5H0z" fill="#5c1c2c" />
            </svg>
          </Lane>
          <Lane>
            <svg width="100%" height="63" aria-hidden="true">
              <path d="M29 2h200v60H29z" fill="#383838" />
              {videoCuts.map(x => <path key={x} d={`M${x}.5 2v60`} stroke="#eee" />)}
            </svg>
          </Lane>
        </Canvas>

        <Rate>
          Rate: 0.00
          <RateSlider width="152" height="24" viewBox="0 0 152 24" role="img" aria-label="Playback rate">
            <path d="M0 9.500h152" stroke="#5c5c5c" />
            <path d="M67 3v12l-6-6zM73 3l7 6-7 6-6-6zM80 3v12l7-6z" fill="#555" stroke="#2c2c2c" />
            <path d="M89.500 14l5 9h-10z" fill="#e07850" stroke="#603020" />
          </RateSlider>
        </Rate>
        <BottomScroll>
          <GreyButton aria-label="Scroll left"><Icon name="left" size={13} /></GreyButton>
          <BottomThumb>
            <svg width="6" height="9"><path d="M1.500 0v9M4.500 0v9" stroke="#333" /></svg>
            <svg width="6" height="9"><path d="M1.500 0v9M4.500 0v9" stroke="#333" /></svg>
          </BottomThumb>
          <GreyButton aria-label="Scroll right"><Icon name="right" size={13} /></GreyButton>
          <GreyButton $after={6} aria-label="Zoom in time"><Icon name="plus" size={13} /></GreyButton>
          <GreyButton aria-label="Zoom out time"><Icon name="minus" size={13} /></GreyButton>
          <GreyButton aria-label="Zoom tool"><Icon name="search" size={10} /></GreyButton>
        </BottomScroll>
        <BottomTools $height={25} $indent={1}>
          <Tools items={editTools} />
        </BottomTools>
      </Timeline>

      <Status>
        <Cancel>Cancel</Cancel>
        <Progress role="progressbar" aria-valuenow={100}>100 %</Progress>
        Opening project scan.veg
        <RecordTime>Record Time (2 channels): 12:18:35</RecordTime>
      </Status>

      <Taskbar>
        <Start><StartFlag />Start</Start>
        {Object.keys(taskArt).map(name => (
          <TaskButton key={name} aria-label={name} $open={name !== 'Player' && name !== 'Android'}>
            <svg width="32" height="32" viewBox="0 0 32 32">{taskArt[name]}</svg>
          </TaskButton>
        ))}
        <TaskButton aria-label="VEGAS Pro" $active><VegasLogo width={30} height={32} /></TaskButton>
        <Tray>
          <svg width="8" height="10" viewBox="0 0 8 10">
            <path d="M1 4l3-3 3 3M1 9l3-3 3 3" fill="none" stroke="#000" strokeWidth="1.500" />
          </svg>
          <svg width="16" height="16" viewBox="0 0 16 16">
            <path d="M1 1v15M2 2c4-2 5 2 7 1v6c-3 1-3-2-7-1zM9 4c2 1 4 1 6 0l-2 6H9" fill="#fff" stroke="#555" strokeWidth="1.200" />
          </svg>
          <svg width="16" height="16" viewBox="0 0 16 16">
            <path d="M4 3h11v9H4zM6 14h9M3 0v7M0 1h5v4H0z" fill="#eee" stroke="#444" strokeWidth="1.300" />
            <path d="M6 5h7v5H6z" fill="#999" />
          </svg>
          <svg width="16" height="16" viewBox="0 0 16 16">
            <path d="M0 5h3l5-4v14l-5-4H0z" fill="#eee" stroke="#777" />
            <circle cx="11" cy="11" r="5" fill="#d43c40" />
            <path d="M9 9l4 4M13 9l-4 4" stroke="#fff" strokeWidth="1.500" />
          </svg>
          <Clock>4:33 AM<br />3/1/2024</Clock>
          <svg width="15" height="12" viewBox="0 0 15 12">
            <path d="M0 0h15v11H0z" fill="#22489a" />
            <path d="M1 1h14v5L1 9z" fill="#5a96dc" />
          </svg>
        </Tray>
      </Taskbar>
    </Page>
  )
}

export default App
